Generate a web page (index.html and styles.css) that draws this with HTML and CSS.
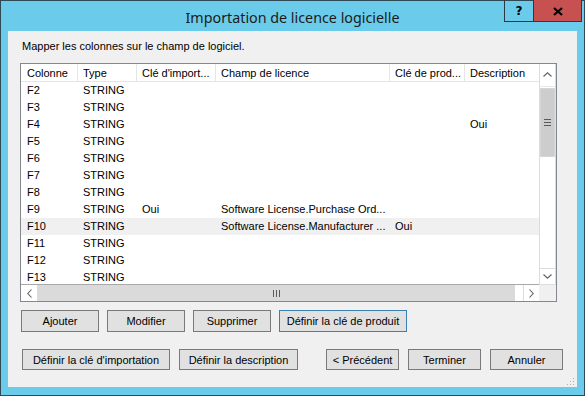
FILE: index.html
```html
<!DOCTYPE html>
<html>
<head>
<meta charset="utf-8">
<link rel="stylesheet" href="styles.css">
</head>
<body>
<div class="window">
  <div class="titlebar">
    <div class="title">Importation de licence logicielle</div>
    <div class="caption-btns">
      <div class="cbtn help">?</div>
      <div class="cbtn close">
        <svg width="10" height="9" viewBox="0 0 10 9"><path d="M1 1 L9 8 M9 1 L1 8" stroke="#000" stroke-width="2.2" fill="none"/></svg>
      </div>
    </div>
  </div>
  <div class="client">
    <div class="caption">Mapper les colonnes sur le champ de logiciel.</div>
    <div class="listview">
      <div class="lv-main">
        <div class="row header">
          <div class="c">Colonne</div>
          <div class="c">Type</div>
          <div class="c">Clé d'import...</div>
          <div class="c">Champ de licence</div>
          <div class="c">Clé de prod...</div>
          <div class="c">Description</div>
        </div>
        <div class="row"><div class="c">F2</div><div class="c">STRING</div><div class="c"></div><div class="c"></div><div class="c"></div><div class="c"></div></div>
        <div class="row"><div class="c">F3</div><div class="c">STRING</div><div class="c"></div><div class="c"></div><div class="c"></div><div class="c"></div></div>
        <div class="row"><div class="c">F4</div><div class="c">STRING</div><div class="c"></div><div class="c"></div><div class="c"></div><div class="c">Oui</div></div>
        <div class="row"><div class="c">F5</div><div class="c">STRING</div><div class="c"></div><div class="c"></div><div class="c"></div><div class="c"></div></div>
        <div class="row"><div class="c">F6</div><div class="c">STRING</div><div class="c"></div><div class="c"></div><div class="c"></div><div class="c"></div></div>
        <div class="row"><div class="c">F7</div><div class="c">STRING</div><div class="c"></div><div class="c"></div><div class="c"></div><div class="c"></div></div>
        <div class="row"><div class="c">F8</div><div class="c">STRING</div><div class="c"></div><div class="c"></div><div class="c"></div><div class="c"></div></div>
        <div class="row"><div class="c">F9</div><div class="c">STRING</div><div class="c">Oui</div><div class="c">Software License.Purchase Ord...</div><div class="c"></div><div class="c"></div></div>
        <div class="row selected"><div class="c">F10</div><div class="c">STRING</div><div class="c"></div><div class="c">Software License.Manufacturer ...</div><div class="c">Oui</div><div class="c"></div></div>
        <div class="row"><div class="c">F11</div><div class="c">STRING</div><div class="c"></div><div class="c"></div><div class="c"></div><div class="c"></div></div>
        <div class="row"><div class="c">F12</div><div class="c">STRING</div><div class="c"></div><div class="c"></div><div class="c"></div><div class="c"></div></div>
        <div class="row"><div class="c">F13</div><div class="c">STRING</div><div class="c"></div><div class="c"></div><div class="c"></div><div class="c"></div></div>
      </div>
      <div class="vscroll">
        <div class="sb-btn up">
          <svg width="9" height="5" viewBox="0 0 9 5"><path d="M0.5 4.5 L4.5 0.8 L8.5 4.5" stroke="#606060" stroke-width="1.1" fill="none"/></svg>
        </div>
        <div class="vtrack">
          <div class="vthumb">
            <div class="vgrip"></div><div class="vgrip"></div><div class="vgrip"></div>
          </div>
        </div>
        <div class="sb-btn down">
          <svg width="9" height="5" viewBox="0 0 9 5"><path d="M0.5 0.5 L4.5 4.2 L8.5 0.5" stroke="#606060" stroke-width="1.1" fill="none"/></svg>
        </div>
      </div>
      <div class="hscroll">
        <div class="hsb-btn">
          <svg width="5" height="9" viewBox="0 0 5 9"><path d="M4.5 0.5 L0.8 4.5 L4.5 8.5" stroke="#606060" stroke-width="1.1" fill="none"/></svg>
        </div>
        <div class="hthumb">
          <div class="hgrip"></div><div class="hgrip"></div><div class="hgrip"></div>
        </div>
        <div class="htrack"></div>
        <div class="hsb-btn">
          <svg width="5" height="9" viewBox="0 0 5 9"><path d="M0.5 0.5 L4.2 4.5 L0.5 8.5" stroke="#606060" stroke-width="1.1" fill="none"/></svg>
        </div>
      </div>
      <div class="corner"></div>
    </div>
    <div class="btn-row row1">
      <div class="btn w78">Ajouter</div>
      <div class="btn w78">Modifier</div>
      <div class="btn w78">Supprimer</div>
      <div class="btn w128 focused">Définir la clé de produit</div>
    </div>
    <div class="btn-row row2">
      <div class="btn w148">Définir la clé d'importation</div>
      <div class="btn w119">Définir la description</div>
      <div class="btn w73 prev">&lt; Précédent</div>
      <div class="btn w73">Terminer</div>
      <div class="btn w73">Annuler</div>
    </div>
    <svg class="grip" width="9" height="9" viewBox="0 0 9 9">
      <rect x="7" y="1" width="1" height="1" fill="#b0b0b0"/>
      <rect x="7" y="4" width="1" height="1" fill="#b0b0b0"/>
      <rect x="4" y="4" width="1" height="1" fill="#b0b0b0"/>
      <rect x="7" y="7" width="1" height="1" fill="#b0b0b0"/>
      <rect x="4" y="7" width="1" height="1" fill="#b0b0b0"/>
      <rect x="1" y="7" width="1" height="1" fill="#b0b0b0"/>
    </svg>
  </div>
</div>
</body>
</html>
```

FILE: styles.css
```css
* { box-sizing: border-box; }
html, body { margin: 0; padding: 0; }
body {
  width: 585px;
  height: 396px;
  overflow: hidden;
  font-family: "Liberation Sans", Arial, sans-serif;
  font-size: 11px;
  color: #000;
}
.window {
  position: relative;
  width: 585px;
  height: 396px;
  border: 1px solid #2f4a55;
  background: #6bcbea;
  padding: 0 7px 8px 7px;
  display: flex;
  flex-direction: column;
}
.titlebar {
  height: 30px;
  flex: none;
}
.title {
  font-family: "Noto Sans", "Open Sans", sans-serif;
  font-size: 14.3px;
  line-height: 30px;
  padding-top: 2px;
  text-align: center;
  color: #1b1b1b;
}
.caption-btns {
  position: absolute;
  top: -1px;
  right: 2px;
  display: flex;
  border: 1px solid #2b3a40;
  border-top: none;
  height: 22px;
}
.cbtn {
  height: 21px;
  display: flex;
  align-items: center;
  justify-content: center;
}
.help {
  width: 29px;
  border-right: 1px solid #2b3a40;
  font-family: "DejaVu Sans", sans-serif;
  font-weight: bold;
  font-size: 12px;
  padding-top: 1px;
}
.close {
  width: 47px;
  background: #c75050;
  padding-top: 2px;
}
.client {
  position: relative;
  flex: 1;
  background: #f0f0f0;
  padding: 8px 0 0 12px;
}
.caption {
  height: 14px;
  line-height: 14px;
  padding-left: 2px;
}
.listview {
  margin-top: 10px;
  width: 537px;
  height: 239px;
  border: 1px solid #828790;
  background: #fff;
  display: grid;
  grid-template-columns: 518px 17px;
  grid-template-rows: 220px 17px;
}
.lv-main {
  overflow: hidden;
}
.row {
  display: grid;
  grid-template-columns: 57px 59px 79px 174px 75px 74px;
  height: 17px;
  line-height: 17px;
}
.row .c {
  padding-left: 5px;
  white-space: nowrap;
  overflow: hidden;
}
.row .c:first-child { padding-left: 6px; }
.header { height: 18px; }
.header .c {
  border-right: 1px solid #e5e5e5;
  border-bottom: 1px solid #e5e5e5;
  line-height: 16px;
  padding-top: 1px;
}
.header .c:last-child { border-right: none; }
.selected { background: #f0f0f0; }
.vscroll {
  display: flex;
  flex-direction: column;
  border-left: 1px solid #dcdcdc;
  border-right: 1px solid #dcdcdc;
  background: #fff;
}
.sb-btn {
  display: flex;
  align-items: center;
  justify-content: center;
}
.sb-btn.up {
  height: 23px;
  border-bottom: 1px solid #e8e8e8;
  padding-bottom: 2px;
}
.sb-btn.down {
  height: 16px;
  border-top: 1px solid #dcdcdc;
}
.vtrack {
  flex: 1;
  padding-top: 1px;
}
.vthumb {
  height: 69px;
  background: #cdcdcd;
  border: 1px solid #d6d6d6;
  display: flex;
  flex-direction: column;
  align-items: center;
  justify-content: center;
  gap: 2px;
}
.vgrip {
  width: 7px;
  height: 1px;
  background: #5a5a5a;
}
.hscroll {
  display: flex;
  border-top: 1px solid #a8a8a8;
  background: #fff;
}
.hsb-btn {
  width: 17px;
  display: flex;
  align-items: center;
  justify-content: center;
  border-right: 1px solid #dcdcdc;
}
.hsb-btn:last-child {
  border-right: none;
  border-left: 1px solid #dcdcdc;
  width: 16px;
}
.hthumb {
  width: 477px;
  background: #dadada;
  display: flex;
  align-items: center;
  justify-content: center;
  gap: 2px;
}
.hgrip {
  width: 1px;
  height: 7px;
  background: #5a5a5a;
}
.htrack { flex: 1; }
.corner {
  background: #f0f0f0;
  border-top: 1px solid #dcdcdc;
}
.btn-row {
  display: flex;
}
.row1 {
  margin-top: 8px;
  padding-left: 1px;
  gap: 8px;
}
.row2 {
  margin-top: 17px;
  padding-left: 2px;
  gap: 9px;
}
.btn {
  height: 22px;
  background: #e1e1e1;
  border: 1px solid #7a7a7a;
  display: flex;
  align-items: center;
  justify-content: center;
  white-space: nowrap;
}
.row2 .btn { height: 21px; }
.focused { border-color: #3c7fb1; }
.w78 { width: 78px; }
.w128 { width: 128px; }
.w148 { width: 148px; }
.w119 { width: 119px; }
.w73 { width: 73px; }
.prev { margin-left: 19px; }
.grip {
  position: absolute;
  right: 2px;
  bottom: 1px;
}
```
